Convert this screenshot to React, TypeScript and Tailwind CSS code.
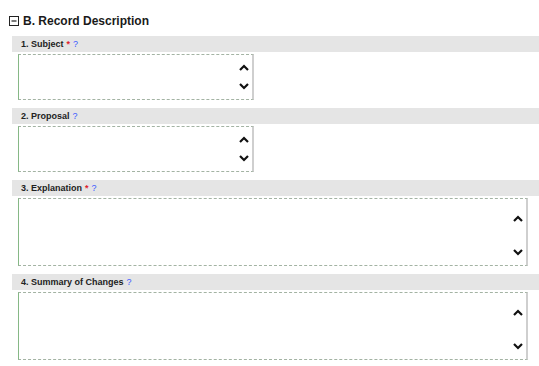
import { FC } from "react";

type Field = {
  label: string;
  required: boolean;
  wide: boolean;
};

const fields: Field[] = [
  { label: "1. Subject", required: true, wide: false },
  { label: "2. Proposal", required: false, wide: false },
  { label: "3. Explanation", required: true, wide: true },
  { label: "4. Summary of Changes", required: false, wide: true },
];

const Chevron: FC<{ up?: boolean }> = ({ up }) => (
  <svg width="10" height="7" viewBox="0 0 10 7" className="block">
    <path
      d={up ? "M1 6 L5 2 L9 6" : "M1 1 L5 5 L9 1"}
      fill="none"
      stroke="#111"
      strokeWidth="2.2"
    />
  </svg>
);

const FieldBlock: FC<{ field: Field }> = ({ field }) => (
  <div className="flex flex-col">
    <div className="h-[16px] bg-[#e5e5e5] pl-[9px] flex items-center text-[9px] font-bold text-[#222] leading-none">
      <span>{field.label}</span>
      {field.required && <span className="text-[#e0202a] ml-[3px]">*</span>}
      <span className="text-[#3b5bff] ml-[3px] font-normal">?</span>
    </div>
    <div className="pl-[6px] pt-[2px]">
      <div
        className={`flex bg-white border border-dashed border-[#a3b3a3] border-l-[#86b886] border-r-2 border-r-[#cfcfcf] ${
          field.wide ? "w-[510px] h-[68px]" : "w-[236px] h-[46px]"
        }`}
        style={{ borderLeftStyle: "solid", borderRightStyle: "solid" }}
      >
        <div className="flex-1" />
        <div
          className={`w-[16px] flex flex-col items-center justify-between ${
            field.wide ? "pt-[16px] pb-[9px]" : "pt-[9px] pb-[9px]"
          }`}
        >
          <Chevron up />
          <Chevron />
        </div>
      </div>
    </div>
  </div>
);

export default function App() {
  return (
    <div
      className="w-[539px] h-[366px] bg-white overflow-hidden"
      style={{ fontFamily: '"Liberation Sans", Arial, sans-serif' }}
    >
      <div className="flex items-center gap-[4px] pl-[9px] pt-[14px] h-[27px]">
        <svg width="10" height="10" viewBox="0 0 10 10" className="block">
          <rect x="0.5" y="0.5" width="9" height="9" fill="white" stroke="#222" />
          <path d="M2.5 5 H7.5" stroke="#222" strokeWidth="1.2" />
        </svg>
        <span className="text-[12px] font-bold text-[#1a1a1a] leading-none">B. Record Description</span>
      </div>
      <div className="pl-[12px] pt-[9px] flex flex-col gap-[8px]">
        {fields.map((f) => (
          <FieldBlock key={f.label} field={f} />
        ))}
      </div>
    </div>
  );
}
